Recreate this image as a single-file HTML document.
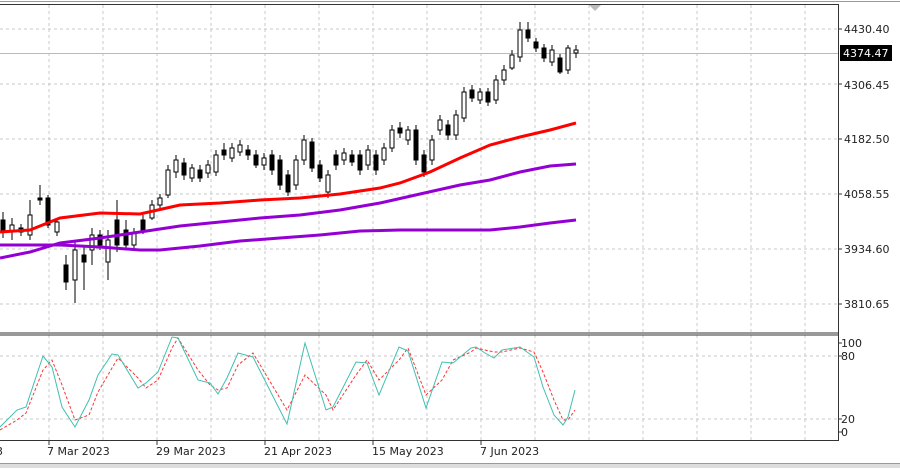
<!DOCTYPE html>
<html><head><meta charset="utf-8"><style>
body{margin:0;width:900px;height:468px;overflow:hidden;background:#fff;font-family:"Liberation Sans",sans-serif}
svg text{font-family:"DejaVu Sans","Liberation Sans",sans-serif;font-size:11px;fill:#222}
</style></head><body>
<svg width="900" height="468" xmlns="http://www.w3.org/2000/svg">
<rect x="0" y="0" width="900" height="468" fill="#fff"/>
<line x1="0" y1="1.5" x2="900" y2="1.5" stroke="#999"/>
<line x1="0" y1="4.5" x2="838" y2="4.5" stroke="#333"/>
<g stroke="#c8c8c8" stroke-dasharray="3,3">
<path d="M49 5V333M103 5V333M157 5V333M211 5V333M265 5V333M319 5V333M373 5V333M427 5V333M481 5V333M535 5V333M589 5V333M643 5V333M697 5V333M751 5V333M805 5V333"/>
<path d="M49 335V440M103 335V440M157 335V440M211 335V440M265 335V440M319 335V440M373 335V440M427 335V440M481 335V440M535 335V440M589 335V440M643 335V440M697 335V440M751 335V440M805 335V440"/>
<path d="M0 29H838M0 84H838M0 139H838M0 194H838M0 249H838M0 304H838M0 356H838M0 419H838"/>
</g>
<line x1="0" y1="53.5" x2="838" y2="53.5" stroke="#bbb"/>
<path d="M589 5l6 6 6-6z" fill="#bbb"/>
<g stroke="#000" stroke-width="1">
<path fill="none" d="M3 212V238M12 218V240M21 224V236M30 200V240M40 185V205M48 195V228M57 218V236M66 255V290M75 240V303M84 245V290M92 228V265M100 230V250M108 230V280M117 200V252M126 220V250M134 228V250M143 215V234M152 200V220M160 194V208M168 165V198M176 155V178M184 158V180M192 164V182M200 165V182M208 160V178M216 150V176M224 143V160M232 143V162M240 140V156M248 145V160M256 150V168M264 153V170M272 150V175M280 155V190M288 170V196M296 155V190M304 135V165M312 138V172M320 160V182M328 170V198M336 150V170M344 148V165M352 150V166M360 150V175M368 145V170M376 150V175M384 143V165M392 125V152M400 122V138M408 126V145M416 125V165M424 150V177M432 135V165M440 115V135M448 120V140M456 110V140M464 87V122M472 85V102M480 88V104M488 88V106M496 75V104M504 65V85M512 50V70M520 22V62M528 22V42M536 38V52M544 44V62M552 45V66M560 54V74M568 45V74M576 45V58"/>
<path fill="#000" d="M1 220h4v10h-4zM19 228h4v4h-4zM38 198h4v2h-4zM46 198h4v27h-4zM64 265h4v17h-4zM82 255h4v7h-4zM98 235h4v10h-4zM115 220h4v25h-4zM124 230h4v15h-4zM141 220h4v10h-4zM182 163h4v12h-4zM198 170h4v8h-4zM222 150h4v5h-4zM246 150h4v5h-4zM254 155h4v10h-4zM270 155h4v15h-4zM278 160h4v25h-4zM286 175h4v17h-4zM310 142h4v26h-4zM318 165h4v13h-4zM334 155h4v10h-4zM350 155h4v7h-4zM358 155h4v15h-4zM374 155h4v15h-4zM398 128h4v5h-4zM414 130h4v30h-4zM422 155h4v17h-4zM446 125h4v10h-4zM470 90h4v8h-4zM486 92h4v10h-4zM526 30h4v8h-4zM534 42h4v6h-4zM542 48h4v10h-4zM558 58h4v14h-4z"/>
<path fill="#fff" d="M10 225h4v7h-4zM28 215h4v20h-4zM55 222h4v10h-4zM73 250h4v30h-4zM90 235h4v15h-4zM106 240h4v22h-4zM132 233h4v12h-4zM150 205h4v13h-4zM158 198h4v7h-4zM166 170h4v25h-4zM174 160h4v12h-4zM190 168h4v10h-4zM206 165h4v8h-4zM214 155h4v17h-4zM230 148h4v10h-4zM238 145h4v7h-4zM262 158h4v7h-4zM294 160h4v25h-4zM302 140h4v20h-4zM326 175h4v17h-4zM342 153h4v7h-4zM366 150h4v15h-4zM382 148h4v12h-4zM390 130h4v18h-4zM406 130h4v10h-4zM430 140h4v20h-4zM438 120h4v10h-4zM454 115h4v20h-4zM462 92h4v26h-4zM478 92h4v8h-4zM494 80h4v20h-4zM502 70h4v10h-4zM510 55h4v13h-4zM518 30h4v27h-4zM550 50h4v12h-4zM566 48h4v22h-4zM574 50h4v3h-4z"/>
</g>
<polyline fill="none" stroke="#f00" stroke-width="3" points="0,232 30,230 60,218 100,213 140,214 180,205 220,203 260,200 300,198 340,194 380,188 400,183 430,172 460,158 490,145 520,137 550,130 576,123"/>
<polyline fill="none" stroke="#9400d3" stroke-width="3" points="0,258 30,252 60,243 100,238 140,232 180,226 220,222 260,218 300,215 340,210 380,203 420,194 460,185 490,180 520,172 550,166 576,164"/>
<polyline fill="none" stroke="#9400d3" stroke-width="3" points="0,245 60,245 100,247 140,250 160,250 200,246 240,241 280,238 320,235 360,231 400,230 440,230 490,230 520,227 550,223 576,220"/>
<line x1="0" y1="333" x2="838" y2="333" stroke="#333"/>
<line x1="0" y1="335" x2="838" y2="335" stroke="#333"/>
<line x1="838.5" y1="4" x2="838.5" y2="441" stroke="#333"/>
<line x1="0" y1="440.5" x2="838" y2="440.5" stroke="#333"/>
<polyline fill="none" stroke="#f33" stroke-width="1" stroke-dasharray="3,2" points="0,430 17,420 26,413 43,370 52,360 62,385 75,420 89,415 98,392 112,368 118,358 138,378 146,388 158,380 172,348 178,338 198,370 210,385 218,390 227,388 238,365 253,353 287,410 305,375 326,395 333,410 356,375 367,360 379,380 399,360 408,348 426,395 442,380 453,360 471,352 476,348 485,350 494,352 502,352 520,348 534,352 543,372 554,400 563,420 568,420 575,410"/>
<polyline fill="none" stroke="#40c0b0" stroke-width="1" points="0,427 17,410 26,407 43,356 52,367 62,407 75,427 89,400 98,375 112,354 118,355 138,388 146,383 158,372 172,337 178,338 198,380 210,383 218,394 227,378 238,353 253,357 287,424 305,343 326,410 333,407 356,362 367,363 379,395 399,347 408,351 426,408 442,362 453,363 471,348 476,347 485,353 494,358 502,350 520,347 534,357 543,387 554,415 563,425 568,417 575,390"/>
<g stroke="#333"><path d="M838 29h4M838 84h4M838 139h4M838 194h4M838 249h4M838 304h4M838 343h4M838 356h4M838 419h4M838 432h4"/></g>
<text x="844" y="33">4430.40</text>
<rect x="840" y="45" width="52" height="16" fill="#000"/>
<text x="843" y="57" style="fill:#fff">4374.47</text>
<text x="844" y="89">4306.45</text>
<text x="844" y="143">4182.50</text>
<text x="844" y="198">4058.55</text>
<text x="844" y="253">3934.60</text>
<text x="844" y="308">3810.65</text>
<text x="841" y="347">100</text>
<text x="841" y="360">80</text>
<text x="841" y="423">20</text>
<text x="841" y="436">0</text>
<text x="-4" y="455">3</text>
<text x="47" y="455">7 Mar 2023</text>
<text x="156" y="455">29 Mar 2023</text>
<text x="264" y="455">21 Apr 2023</text>
<text x="372" y="455">15 May 2023</text>
<text x="480" y="455">7 Jun 2023</text>
<path d="M49 441v4M157 441v4M265 441v4M373 441v4M481 441v4" stroke="#333"/>
<rect x="0" y="463" width="900" height="5" fill="#ddd"/>
<line x1="0" y1="463.5" x2="900" y2="463.5" stroke="#999"/>
</svg>
</body></html>
